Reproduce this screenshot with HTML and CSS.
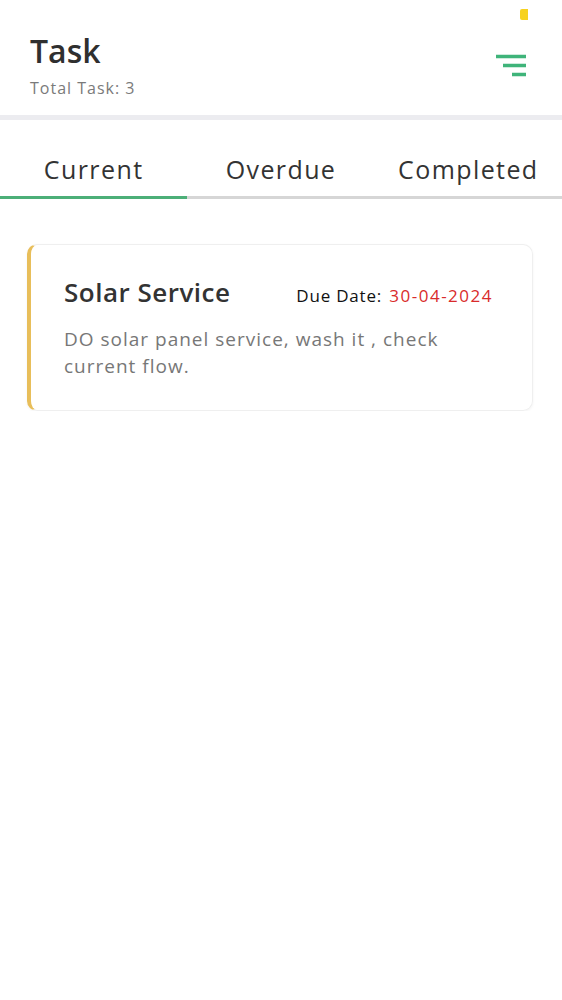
FILE: index.html
```html
<!DOCTYPE html>
<html lang="en">
<head>
  <meta charset="UTF-8" />
  <meta name="viewport" content="width=device-width, initial-scale=1" />
  <title>Task</title>
  <link rel="stylesheet" href="styles.css">
</head>
<body>

  <header>
    <span class="notch"></span>
    <div class="head-text">
      <h1>Task</h1>
      <p class="total">Total Task: 3</p>
    </div>
    <button class="filter" aria-label="Filter">
      <svg width="30" height="24" viewBox="0 0 30 24">
        <path d="M0 3.5H30M7 12.5H30M16 21.5H30" stroke="#3fb47a" stroke-width="3.5" fill="none" />
      </svg>
    </button>
  </header>

  <nav class="tabs">
    <a href="#" class="tab active">Current</a>
    <a href="#" class="tab">Overdue</a>
    <a href="#" class="tab">Completed</a>
  </nav>

  <div class="list">
    <div class="card">
      <div class="card-top">
        <h2>Solar Service</h2>
        <div class="due">Due Date: <span>30-04-2024</span></div>
      </div>
      <p class="desc">DO solar panel service, wash it , check current flow.</p>
    </div>
  </div>

</body>
</html>
```

FILE: styles.css
```css
body {
  margin: 0;
  font-family: "Open Sans", Arial, sans-serif;
  background: #fff;
  color: #333;
}
header {
  position: relative;
  display: flex;
  justify-content: space-between;
  align-items: flex-start;
  padding: 31px 36px 17px 30px;
  border-bottom: 5px solid #ececf0;
}
.notch {
  position: absolute;
  top: 9px;
  left: 520px;
  width: 8px;
  height: 11px;
  background: #f7d21e;
  border-radius: 2px 0 0 2px;
}
h1 {
  margin: 0;
  font-size: 32px;
  line-height: 40px;
  font-weight: 600;
  color: #2f2f2f;
}
.total {
  margin: 7px 0 0;
  font-size: 16px;
  line-height: 20px;
  letter-spacing: 1px;
  color: #7a7a7a;
}
.filter {
  margin-top: 22px;
  padding: 0;
  border: 0;
  background: none;
  line-height: 0;
}
.tabs {
  display: flex;
}
.tab {
  flex: 1;
  text-align: center;
  padding: 34px 0 12px;
  font-size: 25px;
  line-height: 30px;
  font-weight: 500;
  letter-spacing: 1.4px;
  color: #333;
  text-decoration: none;
  border-bottom: 3px solid #d6d6d6;
}
.tab.active {
  border-bottom-color: #4caf78;
}
.list {
  padding: 45px 29px 0 27px;
}
.card {
  border: 1px solid #efefef;
  border-left: 4px solid #e8be5a;
  border-radius: 10px;
  padding: 30px 33px 30px 33px;
  box-shadow: 0 1px 3px rgba(0, 0, 0, 0.05);
}
.card-top {
  display: flex;
  align-items: baseline;
  justify-content: space-between;
  padding-right: 6px;
}
h2 {
  margin: 0;
  font-size: 26px;
  line-height: 34px;
  font-weight: 600;
  letter-spacing: 0.5px;
  color: #333;
}
.due {
  font-size: 17px;
  font-weight: 500;
  letter-spacing: 0.8px;
  color: #111;
}
.due span {
  margin-left: 2px;
  letter-spacing: 1.5px;
  color: #d92b2b;
}
.desc {
  margin: 17px 0 0;
  max-width: 410px;
  font-size: 19px;
  line-height: 27px;
  letter-spacing: 1px;
  color: #777;
}
```
